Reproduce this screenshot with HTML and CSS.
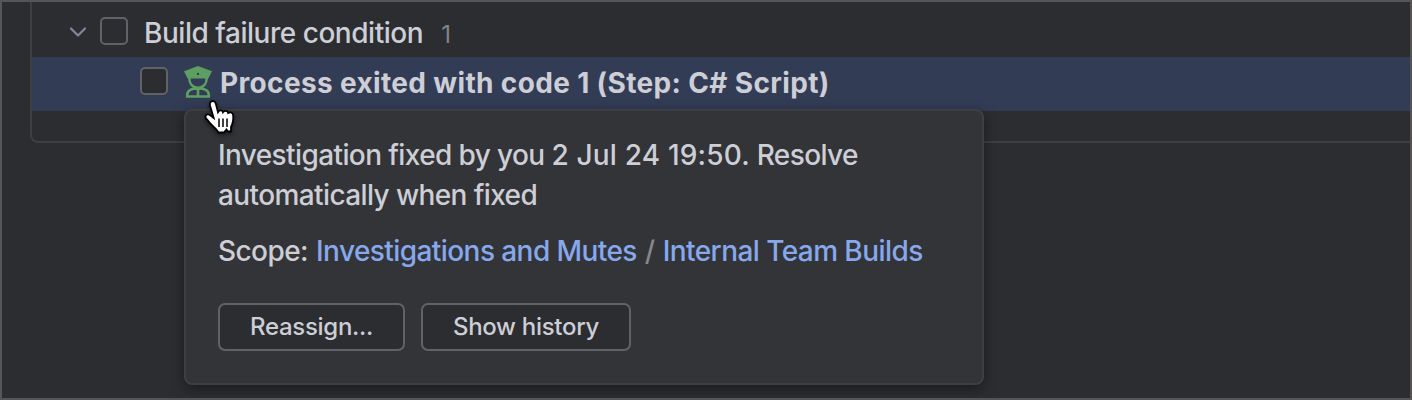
FILE: index.html
```html
<!DOCTYPE html>
<html lang="en">
<head>
<meta charset="utf-8">
<title>Build problems</title>
<link rel="stylesheet" href="styles.css">
</head>
<body>
<main class="frame">
  <section class="group">
    <div class="row row-head">
      <svg class="chevron" viewBox="0 0 18 12"><path d="M2 2.5 9 9.5 16 2.5"/></svg>
      <span class="checkbox"></span>
      <span class="title">Build failure condition</span>
      <span class="count">1</span>
    </div>
    <div class="row row-selected">
      <span class="checkbox"></span>
      <svg class="officer" viewBox="0 0 28 32">
        <path fill-rule="evenodd" d="M14 0 28 5.200 24.300 12.500H3.700L0 5.200ZM13 7v2h2V7Z"/>
        <path class="line" d="M5.300 12c0 6 3.500 9.700 8.700 9.700s8.700-3.700 8.700-9.700M3.200 30.500V29c0-4 3.800-6.500 10.800-6.500s10.800 2.500 10.800 6.500v1.500ZM14 23v7"/>
      </svg>
      <span class="problem">Process exited with code 1 (Step: C# Script)</span>
    </div>
  </section>
  <aside class="popup">
    <p class="message">Investigation fixed by you <span class="date">2 Jul 24 19:50.</span> Resolve<br>automatically when fixed</p>
    <p class="scope"><span class="label">Scope:</span><a class="link-a">Investigations and Mutes</a><span class="slash">/</span><a class="link-b">Internal Team Builds</a></p>
    <div class="actions"><button class="btn btn-a">Reassign...</button><button class="btn btn-b">Show history</button></div>
  </aside>
  <svg class="cursor" viewBox="0 0 40 40">
    <path d="M11.500 5.200C12.800 3.200 16 3.800 16.800 6.500L19 15.200C20.500 12.800 23.500 13 24 15.200C25.500 13.200 28.800 13.500 29.200 16C31.500 14.500 34 15.500 34.200 18.500C34.500 23 34.200 26 32 30V34.500H29L27.500 32.500L25 35.500H19.500C17.500 31.500 11.500 28 8.500 23C5 20.500 6.500 16.500 9.500 17.500C11.500 18 13 19.800 14.700 21L11 8.500C10.700 7 10.800 6 11.500 5.200Z"/>
    <path class="fingers" d="M20 21.500v8.500M24 21.500v8.500M28 21.500v8.500"/>
  </svg>
</main>
</body>
</html>
```

FILE: styles.css
```css
* { box-sizing: border-box; }
body { margin: 0; background: #2b2d30; font-family: Inter, "Liberation Sans", sans-serif; color: #cdced6; }
.frame { position: relative; width: 1412px; height: 400px; border: 2px solid #565455; overflow: hidden; background: #2b2d30; font-size: 28px; font-weight: 450; }
.group { margin-left: 28px; height: 141px; border: solid #3e3f44; border-width: 0 0 2px 2px; border-bottom-left-radius: 8px; }
.row { display: flex; align-items: center; white-space: nowrap; }
.row-head { height: 55px; padding: 7px 0 0 37px; }
.row-selected { height: 54px; padding: 0 0 2px 108px; background: #323c55; }
.chevron { width: 18px; height: 12px; margin: 0 13px 3px 0; fill: none; stroke: #81879b; stroke-width: 2.2; stroke-linecap: round; stroke-linejoin: round; }
.checkbox { width: 28px; height: 28px; border: 2px solid #616267; border-radius: 5px; background: #2b2d30; flex: none; }
.row-head .checkbox { margin-bottom: 5px; }
.row-selected .checkbox { margin-bottom: 4px; }
.title { margin-left: 16px; letter-spacing: -0.47px; }
.count { margin: 2px 0 0 18px; font-size: 24px; font-weight: 400; color: #80848c; }
.officer { width: 28px; height: 32px; margin: 0 8px 2px 16px; fill: #5c9f61; }
.officer .line { fill: none; stroke: #5c9f61; stroke-width: 2.6; }
.problem { font-weight: 700; letter-spacing: 0.35px; }
.popup { position: absolute; left: 182px; top: 107px; width: 800px; height: 276px; padding: 24px 32px; border: 2px solid #3e3f44; border-radius: 8px; background: #333437; box-shadow: 0 4px 14px rgba(0,0,0,.4); white-space: nowrap; }
p { margin: 0; line-height: 40px; letter-spacing: -0.61px; }
.date { letter-spacing: 0.18px; }
.scope { display: flex; margin-top: 16px; letter-spacing: -0.57px; }
.scope a { color: #87a8ec; }
.link-a { margin-left: 8px; }
.slash { margin: 0 8px; color: #85888d; }
.actions { display: flex; gap: 16px; margin-top: 32px; }
.btn { height: 48px; padding: 0 0 2px; border: 2px solid #616267; border-radius: 7px; background: #2b2d30; color: #cdced6; font: 450 24px Inter, "Liberation Sans", sans-serif; letter-spacing: -0.3px; }
.btn-a { width: 187px; }
.btn-b { width: 210px; }
.cursor { position: absolute; left: 197px; top: 95px; width: 40px; height: 40px; fill: #fff; stroke: #000; stroke-width: 1.8; filter: drop-shadow(0 2px 2px rgba(0,0,0,.5)); }
.cursor .fingers { stroke-width: 1.5; }
```
